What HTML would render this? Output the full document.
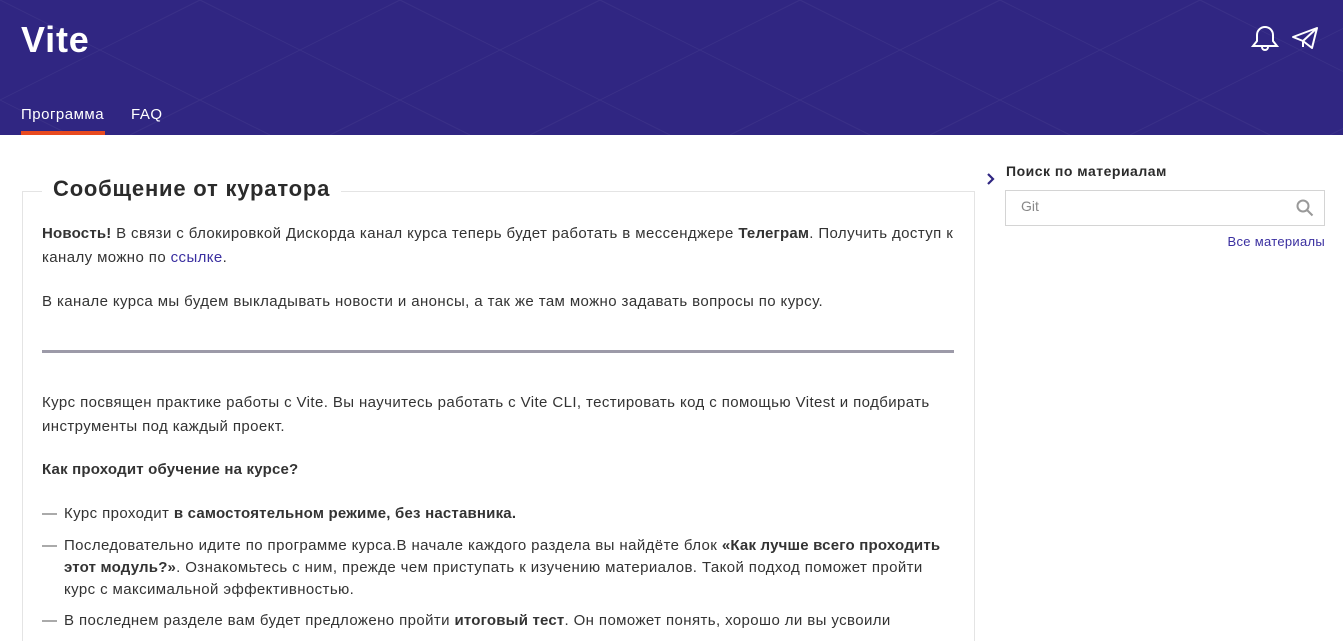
<!DOCTYPE html>
<html><head><meta charset="utf-8"><style>
*{margin:0;padding:0;box-sizing:border-box}
body{width:1343px;height:628px;overflow:hidden;background:#fff;font-family:"Liberation Sans",sans-serif;color:#333;position:relative}
.hdr{position:absolute;left:0;top:0;width:1343px;height:135px;background:#302682;overflow:hidden}
.logo{position:absolute;left:21px;top:19px;color:#fff;font-size:36px;font-weight:bold;letter-spacing:0.8px}
.nav{position:absolute;top:106px;color:#fff;font-size:15px;letter-spacing:0.5px}
.ul{position:absolute;left:21px;top:131px;width:84px;height:5px;background:#e84a1f}
.box{position:absolute;left:22px;top:191px;width:953px;height:450px;border:1px solid #e4e4e4;border-bottom:none}
.title{position:absolute;left:42px;top:176px;background:#fff;padding:0 11px;font-size:22px;font-weight:bold;color:#2b2b2b;letter-spacing:0.8px}
.p{position:absolute;left:42px;font-size:15px;line-height:24px;width:912px;letter-spacing:0.4px}
b{letter-spacing:0.2px}
.hr{position:absolute;left:42px;top:350px;width:912px;height:3px;background:#9c9aa8}
.li{position:absolute;left:42px;font-size:15px;line-height:22px;width:912px;padding-left:22px;letter-spacing:0.4px}
.li:before{content:"—";position:absolute;left:0;color:#555}
a{color:#3a2fa0;text-decoration:none}
</style></head><body>
<div class="hdr">
<svg width="1343" height="135" style="position:absolute;left:0;top:0" stroke="rgba(255,255,255,0.05)" stroke-width="1">
<path d="M-200 0 L70 135 M0 0 L270 135 M200 0 L470 135 M400 0 L670 135 M600 0 L870 135 M800 0 L1070 135 M1000 0 L1270 135 M1200 0 L1470 135 M1400 0 L1670 135 M200 0 L-70 135 M400 0 L130 135 M600 0 L330 135 M800 0 L530 135 M1000 0 L730 135 M1200 0 L930 135 M1400 0 L1130 135 M1600 0 L1330 135"/>
</svg>
<div class="logo">Vite</div>
<div class="nav" style="left:21px">Программа</div>
<div class="nav" style="left:131px">FAQ</div>
<div class="ul"></div>
<svg style="position:absolute;left:1250px;top:23px" width="30" height="30" viewBox="0 0 30 30" fill="none" stroke="#fff" stroke-width="2"><path d="M3 23h24l-4-5V12a8 8 0 0 0-16 0v6z"/><path d="M12 24a3 3 0 0 0 6 0"/></svg>
<svg style="position:absolute;left:1291px;top:26px" width="28" height="24" viewBox="0 0 28 24" fill="none" stroke="#fff" stroke-width="2" stroke-linejoin="round"><path d="M2 11L26 2 21 22 12 15z M12 15L26 2 M12 15v6"/></svg>
</div>
<div class="box"></div>
<div class="title">Сообщение от куратора</div>
<div class="p" style="top:222px"><b>Новость!</b> В связи с блокировкой Дискорда канал курса теперь будет работать в мессенджере <b>Телеграм</b>. Получить доступ к каналу можно по <a>ссылке</a>.</div>
<div class="p" style="top:290px">В канале курса мы будем выкладывать новости и анонсы, а так же там можно задавать вопросы по курсу.</div>
<div class="hr"></div>
<div class="p" style="top:391px">Курс посвящен практике работы с Vite. Вы научитесь работать с Vite CLI, тестировать код с помощью Vitest и подбирать инструменты под каждый проект.</div>
<div class="p" style="top:458px"><b>Как проходит обучение на курсе?</b></div>
<div class="li" style="top:503px">Курс проходит <b>в самостоятельном режиме, без наставника.</b></div>
<div class="li" style="top:535px">Последовательно идите по программе курса.В начале каждого раздела вы найдёте блок <b>«Как лучше всего проходить этот модуль?»</b>. Ознакомьтесь с ним, прежде чем приступать к изучению материалов. Такой подход поможет пройти курс с максимальной эффективностью.</div>
<div class="li" style="top:610px">В последнем разделе вам будет предложено пройти <b>итоговый тест</b>. Он поможет понять, хорошо ли вы усвоили</div>
<svg style="position:absolute;left:986px;top:173px" width="10" height="12" viewBox="0 0 10 12" fill="none" stroke="#302682" stroke-width="2.2"><path d="M2 1l5 5-5 5"/></svg>
<div style="position:absolute;left:1006px;top:163px;font-size:14px;font-weight:bold;color:#2b2b2b;letter-spacing:0.5px">Поиск по материалам</div>
<div style="position:absolute;left:1005px;top:190px;width:320px;height:36px;border:1px solid #d4d4d4"></div>
<div style="position:absolute;left:1021px;top:198px;font-size:14px;color:#888">Git</div>
<svg style="position:absolute;left:1296px;top:199px" width="18" height="18" viewBox="0 0 18 18" fill="none" stroke="#999" stroke-width="2"><circle cx="7" cy="7" r="5.5"/><path d="M11 11l5.5 5.5"/></svg>
<div style="position:absolute;right:18px;top:234px;font-size:13px;color:#3a2fa0;letter-spacing:0.3px">Все материалы</div>
</body></html>
